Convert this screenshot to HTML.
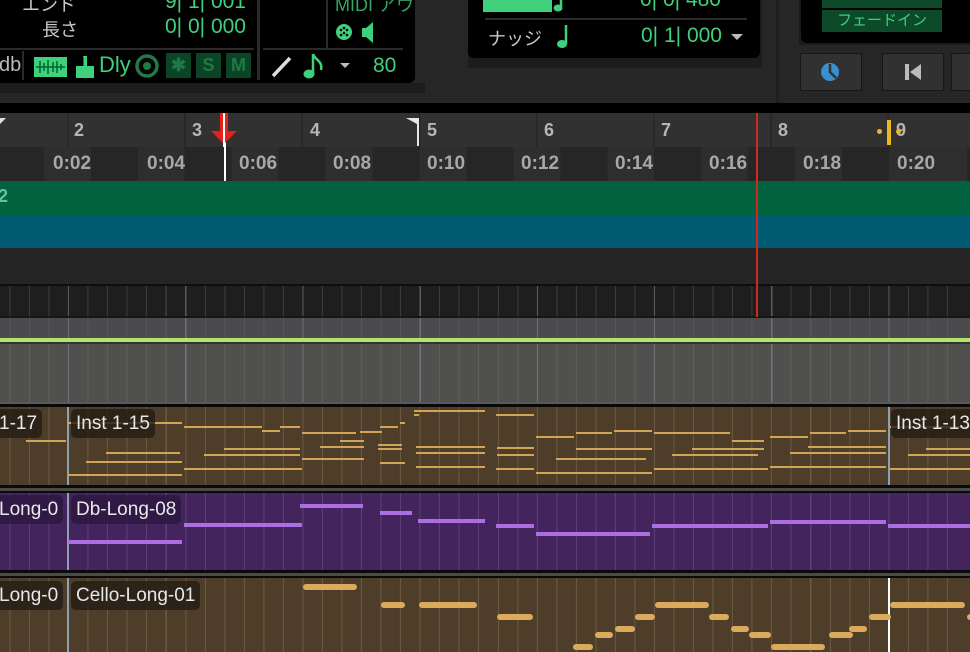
<!DOCTYPE html>
<html><head><meta charset="utf-8"><style>
*{margin:0;padding:0;box-sizing:border-box}
body{width:970px;height:652px;overflow:hidden;background:#262626;position:relative;font-family:"Liberation Sans","Noto Sans CJK JP",sans-serif}
div,span{position:absolute}
.g{color:#3fd07b}
.w{color:#c9c9c9}
.n{height:2px;background:#d2a455}
.p{height:4px;background:#a96fe3}
.c{height:6px;background:#dcaa5d;border-radius:3px}
.lab{background:rgba(35,28,20,.8);color:#e8e8e8;font-size:19px;border-radius:5px;padding:0 5px;height:29px;line-height:29px;white-space:nowrap}
.labp{background:rgba(45,25,65,.85)}
.tc{color:#a8a8a8;font-weight:bold;font-size:19px;top:153px}
.bn{color:#b5b5b5;font-weight:bold;font-size:18px;top:120px}
.sq{width:25px;height:25px;background:#0b4526;color:#1d7a46;font-weight:bold;font-size:18px;text-align:center;line-height:25px;top:53px}
.btn{top:53px;height:38px;background:#313131;border:1px solid #161616;border-radius:2px}
</style></head><body>

<div style="left:0;top:0;width:970px;height:103px;background:#262626"></div>
<div style="left:0;top:83px;width:425px;height:10px;background:#1d1d1d"></div>
<div style="left:0;top:0;width:415px;height:83px;background:#000;border-radius:0 0 6px 0"></div>
<div class="w" style="left:22px;top:-9px;font-size:18px">エンド</div>
<div class="w" style="left:42px;top:16px;font-size:18px">長さ</div>
<div class="g" style="left:165px;top:-10px;font-size:21px">9| 1| 001</div>
<div class="g" style="left:165px;top:15px;font-size:21px">0| 0| 000</div>
<div style="left:257px;top:0;width:3px;height:80px;background:#2a2a2a"></div>
<div style="left:326px;top:0;width:2px;height:48px;background:#2a2a2a"></div>
<div style="left:0;top:48px;width:254px;height:2px;background:#2a2a2a"></div>
<div style="left:263px;top:48px;width:140px;height:2px;background:#2a2a2a"></div>
<div style="left:-1px;top:54px;font-size:20px;color:#bbb">db</div>
<div style="left:22px;top:51px;width:2px;height:29px;background:#2a2a2a"></div>
<div style="left:34px;top:57px;width:33px;height:20px;background:#3fd07b"></div>
<svg style="position:absolute;left:34px;top:57px" width="33" height="20"><path d="M2 10H31M6 4v12M10 6v8M14 3v14M19 5v10M23 4v12M27 7v6" stroke="#063" stroke-width="1.5"/></svg>
<svg style="position:absolute;left:75px;top:55px" width="20" height="24"><path d="M8 1h4v10h7v12H1V11h7z" fill="#3fd07b"/><path d="M8 2v9" stroke="#000" stroke-width="1"/></svg>
<div class="g" style="left:99px;top:52px;font-size:22px">Dly</div>
<svg style="position:absolute;left:134px;top:53px" width="26" height="26"><circle cx="13" cy="13" r="10" fill="none" stroke="#1f7a46" stroke-width="3.5"/><circle cx="13" cy="13" r="4" fill="#1f7a46"/></svg>
<div class="sq" style="left:166px">✱</div>
<div class="sq" style="left:196px">S</div>
<div class="sq" style="left:226px">M</div>
<div class="g" style="left:335px;top:-9px;font-size:18px;opacity:.8">MIDI アウ</div>
<svg style="position:absolute;left:334px;top:20px" width="46" height="26"><circle cx="10" cy="12" r="8" fill="#3fd07b"/><circle cx="7" cy="10" r="1.3" fill="#000"/><circle cx="13" cy="10" r="1.3" fill="#000"/><circle cx="10" cy="8" r="1.3" fill="#000"/><circle cx="10" cy="13" r="1.3" fill="#000"/><circle cx="7" cy="15" r="1.3" fill="#000"/><circle cx="13" cy="15" r="1.3" fill="#000"/><path d="M28 8h4l7-6v21l-7-6h-4z" fill="#3fd07b"/></svg>
<svg style="position:absolute;left:270px;top:55px" width="30" height="24"><path d="M3 21L20 3" stroke="#ddd" stroke-width="3.5"/></svg>
<svg style="position:absolute;left:303px;top:52px" width="22" height="28"><path d="M10 2v20" stroke="#3fd07b" stroke-width="2.5"/><ellipse cx="6" cy="22" rx="5.5" ry="4.5" fill="#3fd07b"/><path d="M10 2c2 6 10 7 8 16" fill="none" stroke="#3fd07b" stroke-width="2.5"/></svg>
<div style="left:340px;top:63px;width:0;height:0;border-left:5px solid transparent;border-right:5px solid transparent;border-top:5px solid #bbb"></div>
<div class="g" style="left:373px;top:54px;font-size:21px">80</div>

<div style="left:468px;top:0;width:294px;height:68px;background:#1c1c1c"></div>
<div style="left:468px;top:0;width:292px;height:58px;background:#000;border-radius:0 0 6px 6px"></div>
<div style="left:483px;top:0;width:69px;height:12px;background:#3fd07b"></div>
<svg style="position:absolute;left:553px;top:-8px" width="16" height="24"><path d="M8 0v16" stroke="#3fd07b" stroke-width="2.5"/><ellipse cx="5" cy="16" rx="4.5" ry="3.5" fill="#3fd07b"/></svg>
<div class="g" style="left:640px;top:-12px;font-size:21px">0| 0| 480</div>
<div style="left:485px;top:18px;width:262px;height:2px;background:#2a2a2a"></div>
<div class="w" style="left:488px;top:25px;font-size:18px">ナッジ</div>
<svg style="position:absolute;left:555px;top:24px" width="16" height="26"><path d="M11 1v19" stroke="#3fd07b" stroke-width="2.5"/><ellipse cx="7" cy="20" rx="5" ry="4" fill="#3fd07b"/></svg>
<div class="g" style="left:641px;top:24px;font-size:21px">0| 1| 000</div>
<div style="left:731px;top:34px;width:0;height:0;border-left:6px solid transparent;border-right:6px solid transparent;border-top:6px solid #bbb"></div>
<div style="left:776px;top:0;width:3px;height:103px;background:#1f1f1f"></div>

<div style="left:799px;top:0;width:171px;height:45px;background:#1b1b1b"></div>
<div style="left:801px;top:0;width:169px;height:43px;background:#000;border-radius:0 0 0 6px"></div>
<div style="left:822px;top:0;width:120px;height:8px;background:#0d4a29"></div>
<div style="left:822px;top:10px;width:120px;height:22px;background:#0d4a29;color:#3fd07b;font-size:15px;text-align:center;line-height:22px">フェードイン</div>
<div class="btn" style="left:800px;width:62px"></div>
<svg style="position:absolute;left:819px;top:61px" width="22" height="22"><circle cx="11" cy="11" r="9" fill="#3a8fd0"/><path d="M11 3v8l6 6" fill="none" stroke="#313131" stroke-width="2.5"/></svg>
<div class="btn" style="left:882px;width:62px"></div>
<svg style="position:absolute;left:903px;top:62px" width="20" height="20"><rect x="2" y="2" width="4" height="16" fill="#bbb"/><path d="M18 2v16L7 10z" fill="#bbb"/></svg>
<div class="btn" style="left:951px;width:30px"></div>

<div style="left:0;top:103px;width:970px;height:10px;background:#000"></div>

<div style="left:0;top:113px;width:970px;height:34px;background:#313131;background-image:repeating-linear-gradient(90deg,transparent 0 115.5px,#272727 115.5px 117.19px);background-position:-48.5px 0"></div>
<div class="bn" style="left:74px">2</div><div class="bn" style="left:192px">3</div><div class="bn" style="left:310px">4</div><div class="bn" style="left:427px">5</div><div class="bn" style="left:544px">6</div><div class="bn" style="left:661px">7</div><div class="bn" style="left:778px">8</div><div class="bn" style="left:896px">9</div>
<svg style="position:absolute;left:0;top:118px" width="8" height="10"><path d="M0 0h6L0 6z" fill="#ddd"/></svg>
<svg style="position:absolute;left:405px;top:118px" width="16" height="28"><path d="M1 0h13v28h-2V6z" fill="#e6e6e6"/></svg>
<div style="left:0;top:147px;width:970px;height:34px;background:#292929;background-image:repeating-linear-gradient(90deg,#2e2e2e 0 46.9px,#262626 46.9px 93.9px);background-position:-50px 0"></div>
<div class="tc" style="left:-11px">0</div>
<div class="tc" style="left:53px">0:02</div><div class="tc" style="left:147px">0:04</div><div class="tc" style="left:239px">0:06</div><div class="tc" style="left:333px">0:08</div><div class="tc" style="left:427px">0:10</div><div class="tc" style="left:521px">0:12</div><div class="tc" style="left:615px">0:14</div><div class="tc" style="left:709px">0:16</div><div class="tc" style="left:803px">0:18</div><div class="tc" style="left:897px">0:20</div>
<div style="left:224px;top:113px;width:2px;height:68px;background:#fff"></div>
<svg style="position:absolute;left:208px;top:113px" width="36" height="34"><path d="M12 0h8v18h9L16 31 3 18h9z" fill="#e8201a"/><rect x="15" y="0" width="2" height="34" fill="#fff"/></svg>
<div style="left:877px;top:129px;width:5px;height:5px;border-radius:50%;background:#e8b81c"></div>
<div style="left:887px;top:120px;width:4px;height:25px;background:#e8b81c"></div>
<div style="left:896px;top:129px;width:5px;height:5px;border-radius:50%;background:#e8b81c"></div>

<div style="left:0;top:181px;width:970px;height:34px;background:#01623f"></div>
<div style="left:-2px;top:186px;color:#5fc49a;font-size:18px;font-weight:bold">2</div>
<div style="left:0;top:215px;width:970px;height:1px;background:#0a5a4a"></div>
<div style="left:0;top:216px;width:970px;height:32px;background:#005b73"></div>
<div style="left:0;top:248px;width:970px;height:36px;background:#252525"></div>
<div style="left:0;top:284px;width:970px;height:2px;background:#0e0e0e"></div>
<div style="left:0;top:286px;width:970px;height:30px;background:#1e1e1e;background-image:repeating-linear-gradient(90deg,transparent 0 116px,#5a5a5e 116px 117.19px),repeating-linear-gradient(90deg,transparent 0 18.5px,#3e3e40 18.5px 19.53px);background-position:-48px 0,-9.1px 0"></div>
<div style="left:0;top:316px;width:970px;height:2px;background:#161616"></div>
<div style="left:0;top:318px;width:970px;height:20px;background:#4b4b4e;background-image:repeating-linear-gradient(90deg,transparent 0 116px,#6e6e76 116px 117.19px),repeating-linear-gradient(90deg,transparent 0 18.5px,#58585c 18.5px 19.53px);background-position:-48px 0,-9.1px 0"></div>
<div style="left:0;top:338px;width:970px;height:4px;background:#b6e36c"></div>
<div style="left:0;top:342px;width:970px;height:2px;background:#333"></div>
<div style="left:0;top:344px;width:970px;height:58px;background:#50514f;background-image:repeating-linear-gradient(90deg,transparent 0 116px,#71727a 116px 117.19px),repeating-linear-gradient(90deg,transparent 0 18.5px,#5e5f5d 18.5px 19.53px);background-position:-48px 0,-9.1px 0"></div>
<div style="left:756px;top:113px;width:2px;height:204px;background:#cf2a20"></div>
<div style="left:0;top:402px;width:970px;height:2px;background:#5a5a5a"></div>
<div style="left:0;top:404px;width:970px;height:3px;background:#080808"></div>

<div style="left:0;top:407px;width:970px;height:78px;background:#4e3e29;background-image:repeating-linear-gradient(90deg,transparent 0 18.5px,#6b5b45 18.5px 19.53px);background-position:-9.1px 0"></div>
<div style="left:0;top:485px;width:970px;height:3px;background:#0a0a0a"></div>
<div style="left:0;top:488px;width:970px;height:3px;background:#4a4a4a"></div>
<div style="left:0;top:491px;width:970px;height:2px;background:#0a0a0a"></div>
<div style="left:0;top:493px;width:970px;height:77px;background:#44245d;background-image:repeating-linear-gradient(90deg,transparent 0 18.5px,#5e4078 18.5px 19.53px);background-position:-9.1px 0"></div>
<div style="left:0;top:570px;width:970px;height:3px;background:#0a0a0a"></div>
<div style="left:0;top:573px;width:970px;height:3px;background:#4a4a4a"></div>
<div style="left:0;top:576px;width:970px;height:2px;background:#0a0a0a"></div>
<div style="left:0;top:578px;width:970px;height:74px;background:#4e3e29;background-image:repeating-linear-gradient(90deg,transparent 0 18.5px,#6b5b45 18.5px 19.53px);background-position:-9.1px 0"></div>

<div style="left:67px;top:407px;width:2px;height:78px;background:#8da1b3"></div>
<div style="left:888px;top:407px;width:2px;height:78px;background:#8da1b3"></div>
<div style="left:67px;top:493px;width:2px;height:77px;background:#8da1b3"></div>
<div style="left:67px;top:578px;width:2px;height:74px;background:#8da1b3"></div>
<div style="left:888px;top:578px;width:2px;height:74px;background:#fff"></div>

<div class="n" style="left:26px;top:440px;width:40px"></div>
<div class="n" style="left:68px;top:422px;width:114px"></div>
<div class="n" style="left:68px;top:474px;width:114px"></div>
<div class="n" style="left:86px;top:461px;width:96px"></div>
<div class="n" style="left:106px;top:452px;width:74px"></div>
<div class="n" style="left:184px;top:426px;width:78px"></div>
<div class="n" style="left:262px;top:430px;width:18px"></div>
<div class="n" style="left:280px;top:426px;width:20px"></div>
<div class="n" style="left:302px;top:432px;width:54px"></div>
<div class="n" style="left:360px;top:431px;width:22px"></div>
<div class="n" style="left:380px;top:426px;width:18px"></div>
<div class="n" style="left:400px;top:422px;width:5px"></div>
<div class="n" style="left:414px;top:410px;width:71px"></div>
<div class="n" style="left:414px;top:414px;width:5px"></div>
<div class="n" style="left:184px;top:468px;width:118px"></div>
<div class="n" style="left:204px;top:454px;width:96px"></div>
<div class="n" style="left:224px;top:448px;width:76px"></div>
<div class="n" style="left:302px;top:458px;width:62px"></div>
<div class="n" style="left:320px;top:446px;width:44px"></div>
<div class="n" style="left:340px;top:440px;width:24px"></div>
<div class="n" style="left:378px;top:444px;width:24px"></div>
<div class="n" style="left:378px;top:448px;width:24px"></div>
<div class="n" style="left:380px;top:462px;width:25px"></div>
<div class="n" style="left:416px;top:446px;width:69px"></div>
<div class="n" style="left:416px;top:452px;width:69px"></div>
<div class="n" style="left:416px;top:466px;width:69px"></div>
<div class="n" style="left:496px;top:414px;width:38px"></div>
<div class="n" style="left:497px;top:447px;width:37px"></div>
<div class="n" style="left:497px;top:454px;width:37px"></div>
<div class="n" style="left:496px;top:468px;width:38px"></div>
<div class="n" style="left:536px;top:436px;width:38px"></div>
<div class="n" style="left:576px;top:432px;width:36px"></div>
<div class="n" style="left:614px;top:430px;width:38px"></div>
<div class="n" style="left:556px;top:458px;width:90px"></div>
<div class="n" style="left:536px;top:472px;width:116px"></div>
<div class="n" style="left:576px;top:448px;width:76px"></div>
<div class="n" style="left:654px;top:432px;width:76px"></div>
<div class="n" style="left:732px;top:440px;width:32px"></div>
<div class="n" style="left:692px;top:448px;width:72px"></div>
<div class="n" style="left:672px;top:454px;width:86px"></div>
<div class="n" style="left:654px;top:468px;width:114px"></div>
<div class="n" style="left:770px;top:436px;width:38px"></div>
<div class="n" style="left:810px;top:432px;width:36px"></div>
<div class="n" style="left:848px;top:430px;width:38px"></div>
<div class="n" style="left:808px;top:446px;width:78px"></div>
<div class="n" style="left:790px;top:452px;width:96px"></div>
<div class="n" style="left:770px;top:466px;width:116px"></div>
<div class="n" style="left:890px;top:468px;width:80px"></div>
<div class="n" style="left:908px;top:454px;width:62px"></div>
<div class="n" style="left:926px;top:448px;width:44px"></div>
<div class="n" style="left:890px;top:426px;width:80px"></div>

<div class="p" style="left:68px;top:540px;width:114px"></div>
<div class="p" style="left:184px;top:523px;width:118px"></div>
<div class="p" style="left:300px;top:504px;width:63px"></div>
<div class="p" style="left:380px;top:511px;width:32px"></div>
<div class="p" style="left:418px;top:519px;width:67px"></div>
<div class="p" style="left:496px;top:524px;width:38px"></div>
<div class="p" style="left:536px;top:532px;width:114px"></div>
<div class="p" style="left:652px;top:524px;width:116px"></div>
<div class="p" style="left:770px;top:520px;width:116px"></div>
<div class="p" style="left:888px;top:524px;width:82px"></div>

<div class="c" style="left:303px;top:584px;width:54px"></div>
<div class="c" style="left:381px;top:602px;width:24px"></div>
<div class="c" style="left:419px;top:602px;width:58px"></div>
<div class="c" style="left:497px;top:614px;width:36px"></div>
<div class="c" style="left:573px;top:644px;width:20px"></div>
<div class="c" style="left:595px;top:632px;width:18px"></div>
<div class="c" style="left:615px;top:626px;width:20px"></div>
<div class="c" style="left:635px;top:614px;width:20px"></div>
<div class="c" style="left:655px;top:602px;width:54px"></div>
<div class="c" style="left:709px;top:614px;width:20px"></div>
<div class="c" style="left:731px;top:626px;width:18px"></div>
<div class="c" style="left:749px;top:632px;width:22px"></div>
<div class="c" style="left:771px;top:644px;width:54px"></div>
<div class="c" style="left:829px;top:632px;width:24px"></div>
<div class="c" style="left:849px;top:626px;width:18px"></div>
<div class="c" style="left:869px;top:614px;width:22px"></div>
<div class="c" style="left:890px;top:602px;width:75px"></div>
<div class="c" style="left:967px;top:614px;width:10px"></div>

<div class="lab" style="left:-6px;top:409px">1-17</div>
<div class="lab" style="left:71px;top:409px">Inst 1-15</div>
<div class="lab" style="left:891px;top:409px">Inst 1-13</div>
<div class="lab labp" style="left:-6px;top:495px;width:69px;overflow:hidden">Long-0</div>
<div class="lab labp" style="left:71px;top:495px">Db-Long-08</div>
<div class="lab" style="left:-6px;top:581px;width:69px;overflow:hidden">Long-0</div>
<div class="lab" style="left:71px;top:581px">Cello-Long-01</div>

</body></html>
